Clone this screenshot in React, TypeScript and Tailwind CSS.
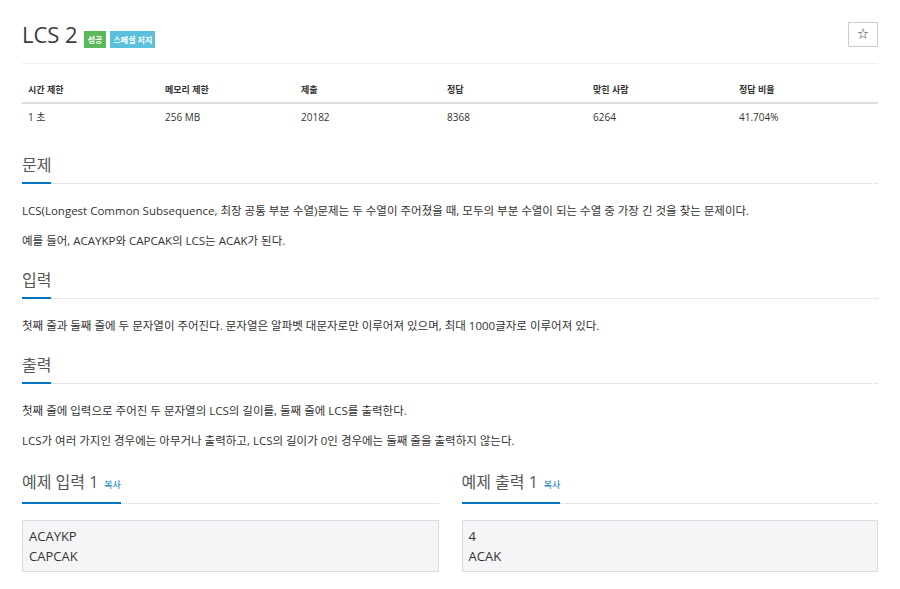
import React from "react";

const font = { fontFamily: '"Open Sans", "Noto Sans CJK KR", sans-serif' };

const stats = [
  { label: "시간 제한", value: "1 초" },
  { label: "메모리 제한", value: "256 MB" },
  { label: "제출", value: "20182" },
  { label: "정답", value: "8368" },
  { label: "맞힌 사람", value: "6264" },
  { label: "정답 비율", value: "41.704%" },
];

function Headline({ children, className = "" }: { children: React.ReactNode; className?: string }) {
  return (
    <div className={`flex items-end ${className}`}>
      <div className="border-b-2 border-[#0076c0] pb-[7px] text-[16px] leading-[20px] text-[#555] flex items-baseline">
        {children}
      </div>
      <div className="flex-1 border-b border-dotted border-[#ccd0d8]" />
    </div>
  );
}

function Body({ children }: { children: React.ReactNode }) {
  return <div className="mt-[17px] flex flex-col gap-[10px] text-[11.5px] leading-[20px] text-[#333]">{children}</div>;
}

function Example({ title, lines }: { title: string; lines: string[] }) {
  return (
    <div>
      <Headline>
        <span>{title}</span>
        <span className="ml-[6px] text-[9px] text-[#0076c0]">복사</span>
      </Headline>
      <pre
        className="mt-[16px] border border-[#dcdce0] bg-[#f5f5f7] px-[6px] py-[5px] text-[13px] leading-[20px] text-[#333]"
        style={font}
      >
        {lines.join("\n")}
      </pre>
    </div>
  );
}

export default function App() {
  return (
    <div className="w-[900px] min-h-[589px] bg-white px-[22px] pt-[22px]" style={font}>
      {/* title */}
      <div className="flex items-start justify-between">
        <div className="flex items-start">
          <h1 className="text-[22px] leading-[25px] text-[#3a3d45]">LCS 2</h1>
          <span className="ml-[6px] mt-[9px] h-[17px] px-[4px] bg-[#5cb85c] text-white text-[8px] font-bold leading-[17px]">
            성공
          </span>
          <span className="ml-[4px] mt-[9px] h-[17px] px-[3px] bg-[#5bc0de] text-white text-[8px] font-bold leading-[17px]">
            스페셜 저지
          </span>
        </div>
        <div className="w-[30px] h-[25px] border border-[#ccc] flex items-center justify-center text-[11px] text-[#333]">
          ☆
        </div>
      </div>
      <div className="mt-[15px] border-t border-[#eee]" />

      {/* stats table */}
      <div className="mt-[14px]">
        <div className="grid grid-cols-[137px_136px_146px_146px_146px_1fr] h-[26px] items-center border-b-2 border-[#ddd]">
          {stats.map((s) => (
            <div key={s.label} className="px-[6px] text-[9px] font-bold text-[#333]">
              {s.label}
            </div>
          ))}
        </div>
        <div className="grid grid-cols-[137px_136px_146px_146px_146px_1fr] h-[26px] items-center">
          {stats.map((s) => (
            <div key={s.label} className="px-[6px] text-[10px] text-[#333]">
              {s.value}
            </div>
          ))}
        </div>
      </div>

      {/* 문제 */}
      <section className="mt-[25px]">
        <Headline>문제</Headline>
        <Body>
          <p>
            LCS(Longest Common Subsequence, 최장 공통 부분 수열)문제는 두 수열이 주어졌을 때, 모두의 부분 수열이 되는 수열 중 가장 긴 것을 찾는 문제이다.
          </p>
          <p>예를 들어, ACAYKP와 CAPCAK의 LCS는 ACAK가 된다.</p>
        </Body>
      </section>

      {/* 입력 */}
      <section className="mt-[19px]">
        <Headline>입력</Headline>
        <Body>
          <p>첫째 줄과 둘째 줄에 두 문자열이 주어진다. 문자열은 알파벳 대문자로만 이루어져 있으며, 최대 1000글자로 이루어져 있다.</p>
        </Body>
      </section>

      {/* 출력 */}
      <section className="mt-[19px]">
        <Headline>출력</Headline>
        <Body>
          <p>첫째 줄에 입력으로 주어진 두 문자열의 LCS의 길이를, 둘째 줄에 LCS를 출력한다.</p>
          <p>LCS가 여러 가지인 경우에는 아무거나 출력하고, LCS의 길이가 0인 경우에는 둘째 줄을 출력하지 않는다.</p>
        </Body>
      </section>

      {/* 예제 */}
      <div className="mt-[21px] grid grid-cols-2 gap-[23px]">
        <Example title="예제 입력 1" lines={["ACAYKP", "CAPCAK"]} />
        <Example title="예제 출력 1" lines={["4", "ACAK"]} />
      </div>
    </div>
  );
}
